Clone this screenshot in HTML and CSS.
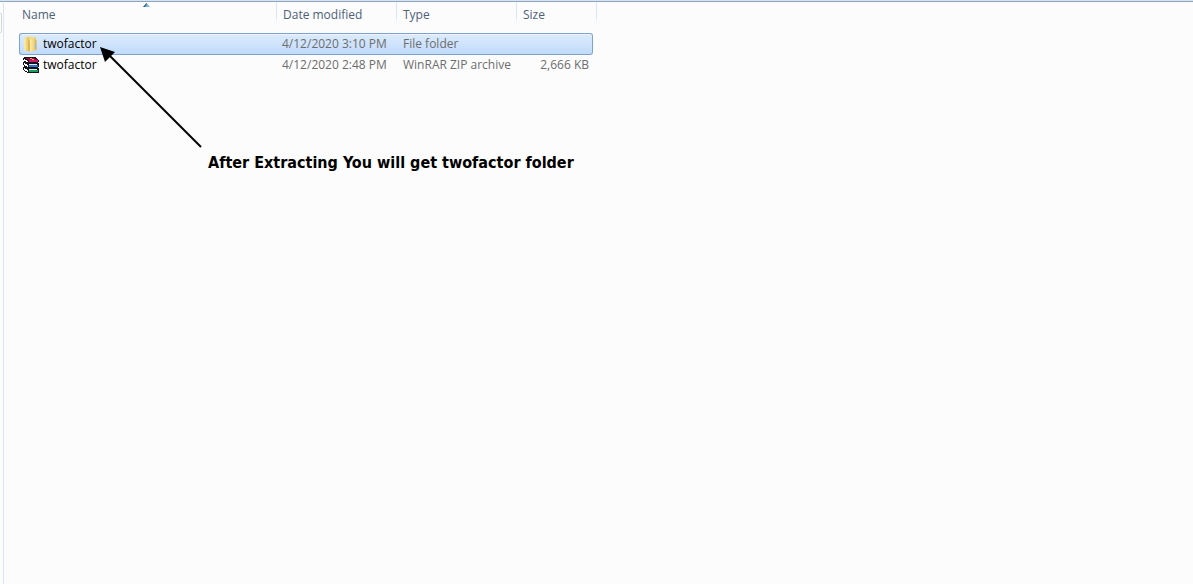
FILE: index.html
```html
<!DOCTYPE html>
<html lang="en">
<head>
<meta charset="utf-8">
<title>twofactor</title>
<link rel="stylesheet" href="styles.css">
</head>
<body>
<div class="explorer">
  <aside class="nav-edge"><div class="nav-thumb"></div></aside>
  <main class="content">
    <table class="files">
      <colgroup><col class="col-name"><col class="col-date"><col class="col-type"><col class="col-size"></colgroup>
      <thead>
        <tr>
          <th scope="col">Name
            <svg class="sort" width="7" height="4" viewBox="0 0 7 4" aria-hidden="true"><path d="M3.5 0L7 4H0Z" fill="#7fb5d3"/><path d="M3.5 0L0 4H2L4 1Z" fill="#376985"/></svg>
          </th>
          <th scope="col">Date modified</th>
          <th scope="col">Type</th>
          <th scope="col">Size</th>
        </tr>
      </thead>
      <tbody>
        <tr class="selected">
          <td><div class="file">
            <svg width="16" height="16" viewBox="0 0 16 16" aria-hidden="true">
              <defs><linearGradient id="fold"><stop offset="0" stop-color="#fbeeb0"/><stop offset="1" stop-color="#e6c25c"/></linearGradient></defs>
              <path d="M1 2L4 1H6V15H2L1 14Z" fill="url(#fold)"/>
              <path d="M6 1L9 0L10 1V14H5L6 12Z" fill="#f3dc86"/>
              <path d="M5 3V14L7 16V5Z" fill="#dcb84f"/>
              <path d="M7 4L12 1L13 2V14L8 16L7 15Z" fill="url(#fold)"/>
              <path d="M13 4V14" stroke="#d4ae4b"/>
              <path d="M12.5 9V12" stroke="#80b8e5"/>
            </svg>
            <span>twofactor</span></div></td>
          <td>4/12/2020 3:10 PM</td>
          <td>File folder</td>
          <td class="size"></td>
        </tr>
        <tr>
          <td><div class="file">
            <svg width="16" height="16" viewBox="0 0 16 16" shape-rendering="crispEdges" aria-hidden="true">
              <path d="M1 0H12L15 2L16 4L15 6L16 7V9L15 11L16 12V15L15 16H5L0 13V10L1 9L0 8V5L1 4L0 3V1Z" fill="#17131c"/>
              <path d="M2 1H11L15 3H6Z" fill="#970b4b"/>
              <path d="M6 3H15V5H6Z" fill="#c81f67"/>
              <path d="M1 2H2V3H4V4H5V5H3V4H1Z" fill="#fff"/>
              <path d="M1 6H2V7H4V8H5V10H4V9H2V8H1Z" fill="#fff"/>
              <path d="M1 11H2V12H4V13H5V15H4V14H2V13H1Z" fill="#fff"/>
              <path d="M6 7H14V8H6Z" fill="#e8e8f4"/>
              <path d="M6 8H15V10H6Z" fill="#2877cf"/>
              <path d="M6 12H14V13H6Z" fill="#e4f4e9"/>
              <path d="M6 13H15V15H6Z" fill="#1b9b5c"/>
              <path d="M7 1H9V2H11V3H9V2H7Z" fill="#e7a34f"/>
            </svg>
            <span>twofactor</span></div></td>
          <td>4/12/2020 2:48 PM</td>
          <td>WinRAR ZIP archive</td>
          <td class="size">2,666 KB</td>
        </tr>
      </tbody>
    </table>
    <div class="note">
      <svg class="arrow" width="104" height="104" viewBox="0 0 104 104" aria-hidden="true"><path d="M9 9L101 101" stroke="#000" stroke-width="2"/><path d="M0 1L15 6L5 16Z"/></svg>
      <p>After Extracting You will get twofactor folder</p>
    </div>
  </main>
</div>
</body>
</html>
```
FILE: styles.css
```css
* { box-sizing: border-box; }
body {
  margin: 0;
  background: #fcfcfc;
  color: #6d6d6d;
  font: 12px/20px "Open Sans", "Noto Sans", sans-serif;
}
.explorer {
  display: flex;
  min-height: 100vh;
  border-top: 1px solid #d5e2f0;
}
.nav-edge {
  width: 4px;
  padding-top: 11px;
  border-top: 1px solid #91a5be;
  border-right: 1px solid #d9e7f5;
}
.nav-thumb {
  width: 2px;
  height: 20px;
  border: 1px solid #d5d5d5;
  border-left: 0;
  border-radius: 0 2px 2px 0;
}
.content {
  flex: 1;
  padding-left: 15px;
  border-top: 1px solid #91a5be;
}
.files {
  width: 574px;
  table-layout: fixed;
  border-collapse: separate;
  border-spacing: 0;
}
.col-name { width: 258px; }
.col-date, .col-type { width: 120px; }
th {
  position: relative;
  height: 31px;
  padding: 3px 0 8px 6px;
  color: #4c607a;
  font-weight: 400;
  text-align: left;
}
th:first-child { padding-left: 3px; }
th::after {
  content: "";
  position: absolute;
  top: 0;
  right: 0;
  width: 1px;
  height: 22px;
  background: linear-gradient(#dceafa, #d5e5f5 60%, #fcfcfc);
}
th:last-child::after { right: -4px; }
.sort { position: absolute; top: 1px; left: 124px; }
td {
  height: 20px;
  padding: 0 4px 0 5px;
  line-height: 20px;
  white-space: nowrap;
}
td:first-child { padding-left: 4px; }
td:nth-child(3) { padding-left: 6px; }
.selected td {
  height: 22px;
  border: solid #7da2ce;
  border-width: 1px 0;
  background: linear-gradient(#dcebfc, #c1dbfc);
  box-shadow: inset 0 1px #ebf4fd;
}
.selected td:first-child {
  padding-left: 3px;
  border-left-width: 1px;
  border-radius: 3px 0 0 3px;
}
.selected td:last-child {
  border-right-width: 1px;
  border-radius: 0 3px 3px 0;
}
.file {
  display: flex;
  align-items: center;
  gap: 4px;
  color: #000;
}
.size { text-align: right; }
.note {
  position: absolute;
  top: 46px;
  left: 100px;
  color: #000;
  font: bold 16px/20px "DejaVu Sans Condensed", "DejaVu Sans", sans-serif;
}
.arrow { display: block; }
.note p { margin: 3px 0 0 108px; white-space: nowrap; }
```
